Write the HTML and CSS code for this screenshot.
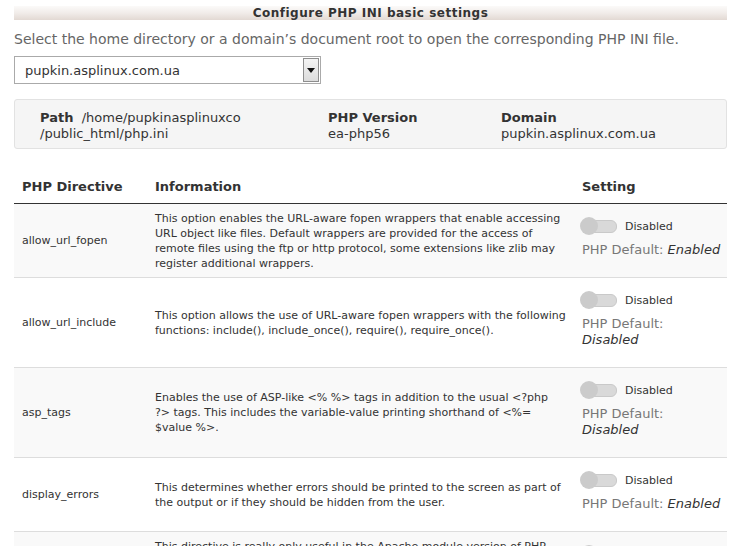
FILE: index.html
```html
<!DOCTYPE html>
<html>
<head>
<meta charset="utf-8">
<title>Configure PHP INI basic settings</title>
<link rel="stylesheet" href="styles.css">
</head>
<body>
<div class="page">
  <h1 class="title-bar">Configure PHP INI basic settings</h1>
  <p class="lead">Select the home directory or a domain’s document root to open the corresponding PHP INI file.</p>
  <div class="select">
    <span class="select-value">pupkin.asplinux.com.ua</span>
    <span class="select-arrow"><span class="tri"></span></span>
  </div>
  <div class="info-box">
    <div class="info-col info-path"><b>Path</b>&nbsp; /home/pupkinasplinuxco<br>/public_html/php.ini</div>
    <div class="info-col info-ver"><b>PHP Version</b><br>ea-php56</div>
    <div class="info-col info-dom"><b>Domain</b><br>pupkin.asplinux.com.ua</div>
  </div>
  <table class="directives">
    <colgroup>
      <col class="c-dir">
      <col class="c-info">
      <col class="c-set">
    </colgroup>
    <thead>
      <tr><th>PHP Directive</th><th>Information</th><th>Setting</th></tr>
    </thead>
    <tbody>
      <tr class="odd">
        <td class="dir">allow_url_fopen</td>
        <td class="desc">This option enables the URL-aware fopen wrappers that enable accessing URL object like files. Default wrappers are provided for the access of remote files using the ftp or http protocol, some extensions like zlib may register additional wrappers.</td>
        <td class="set"><div class="tg-row"><span class="toggle"><span class="knob"></span></span><span class="tg-label">Disabled</span></div><div class="def">PHP Default: <i>Enabled</i></div></td>
      </tr>
      <tr>
        <td class="dir">allow_url_include</td>
        <td class="desc">This option allows the use of URL-aware fopen wrappers with the following functions: include(), include_once(), require(), require_once().</td>
        <td class="set"><div class="tg-row"><span class="toggle"><span class="knob"></span></span><span class="tg-label">Disabled</span></div><div class="def">PHP Default: <i>Disabled</i></div></td>
      </tr>
      <tr class="odd">
        <td class="dir">asp_tags</td>
        <td class="desc">Enables the use of ASP-like <span class="nw">&lt;% %&gt;</span> tags in addition to the usual <span class="nw">&lt;?php</span> <span class="nw">?&gt; tags.</span> This includes the variable-value printing shorthand of <span class="nw">&lt;%=</span> <span class="nw">$value %&gt;.</span></td>
        <td class="set"><div class="tg-row"><span class="toggle"><span class="knob"></span></span><span class="tg-label">Disabled</span></div><div class="def">PHP Default: <i>Disabled</i></div></td>
      </tr>
      <tr>
        <td class="dir">display_errors</td>
        <td class="desc">This determines whether errors should be printed to the screen as part of the output or if they should be hidden from the user.</td>
        <td class="set"><div class="tg-row"><span class="toggle"><span class="knob"></span></span><span class="tg-label">Disabled</span></div><div class="def">PHP Default: <i>Enabled</i></div></td>
      </tr>
      <tr class="odd">
        <td class="dir">enable_dl</td>
        <td class="desc">This directive is really only useful in the Apache module version of PHP. You can turn dynamic loading of PHP extensions with dl() on and off per virtual server or per directory. The default is turned off for security reasons.</td>
        <td class="set"><div class="tg-row"><span class="toggle"><span class="knob"></span></span><span class="tg-label">Disabled</span></div><div class="def">PHP Default: <i>Enabled</i></div></td>
      </tr>
    </tbody>
  </table>
</div>
</body>
</html>
```
FILE: styles.css
```css
html, body {
  margin: 0;
  padding: 0;
  background: #fff;
}
body {
  font-family: "DejaVu Sans", Verdana, sans-serif;
  color: #333;
}
.page {
  width: 713px;
  margin-left: 14px;
  padding-top: 6px;
}
.title-bar {
  margin: 0;
  height: 14px;
  line-height: 14px;
  font-family: "DejaVu Sans", sans-serif;
  font-weight: bold;
  font-size: 12px;
  letter-spacing: 0.5px;
  text-align: center;
  color: #333;
  background: linear-gradient(to bottom, #fbfaf9 0%, #f1ece9 50%, #e2d9d3 100%);
}
.lead {
  margin: 11px 0 0;
  font-size: 14px;
  line-height: 17px;
  color: #666;
}
.select {
  margin-top: 8px;
  width: 305px;
  height: 26px;
  border: 1px solid #aaa;
  display: flex;
  align-items: center;
  justify-content: space-between;
  background: #fff;
}
.select-value {
  padding-left: 10px;
  font-size: 13px;
  color: #333;
}
.select-arrow {
  width: 16px;
  height: 24px;
  margin-right: 1px;
  border: 1px solid #8e8e8e;
  box-sizing: border-box;
  background: linear-gradient(to bottom, #f4f4f4, #dcdcdc);
  display: flex;
  align-items: center;
  justify-content: center;
}
.tri {
  width: 0;
  height: 0;
  border-left: 4px solid transparent;
  border-right: 4px solid transparent;
  border-top: 5px solid #111;
}
.info-box {
  margin-top: 15px;
  border: 1px solid #e2e2e2;
  border-radius: 3px;
  background: #f5f5f5;
  display: grid;
  grid-template-columns: 288px 173px 1fr;
  padding: 10px 0 6px 25px;
  font-size: 13px;
  line-height: 16px;
  color: #333;
}
.info-col b {
  font-weight: bold;
}
.directives {
  margin-top: 22px;
  width: 713px;
  border-collapse: collapse;
  table-layout: fixed;
}
.c-dir { width: 133px; }
.c-info { width: 427px; }
.c-set { width: 153px; }
.directives th {
  text-align: left;
  font-size: 13px;
  line-height: 16px;
  font-weight: bold;
  color: #333;
  padding: 8px 8px 8px;
  border-bottom: 1px solid #333;
}
.directives td {
  font-size: 11px;
  line-height: 15px;
  color: #333;
  padding: 0 8px;
  border-bottom: 1px solid #ddd;
  vertical-align: middle;
}
.nw {
  white-space: nowrap;
}
.directives tr.odd td {
  background: #f9f9f9;
}
.directives td.set {
  vertical-align: top;
  padding: 13px 6px 19px 8px;
}
.tg-row {
  display: flex;
  align-items: center;
  height: 18px;
  margin-left: -2px;
}
.toggle {
  position: relative;
  width: 37px;
  height: 18px;
  display: inline-block;
}
.toggle::before {
  content: "";
  position: absolute;
  left: 8px;
  right: 0;
  top: 3px;
  height: 11px;
  border: 1px solid #c9c9c9;
  border-radius: 6px;
  background: #d9d9d9;
}
.knob {
  position: absolute;
  left: 0;
  top: 0;
  width: 18px;
  height: 18px;
  border-radius: 50%;
  background: #cbcbcb;
}
.tg-label {
  margin-left: 8px;
  font-size: 11px;
  color: #333;
}
.def {
  margin-top: 7px;
  font-size: 13px;
  line-height: 16px;
  color: #777;
}
.def i {
  color: #333;
}
```
